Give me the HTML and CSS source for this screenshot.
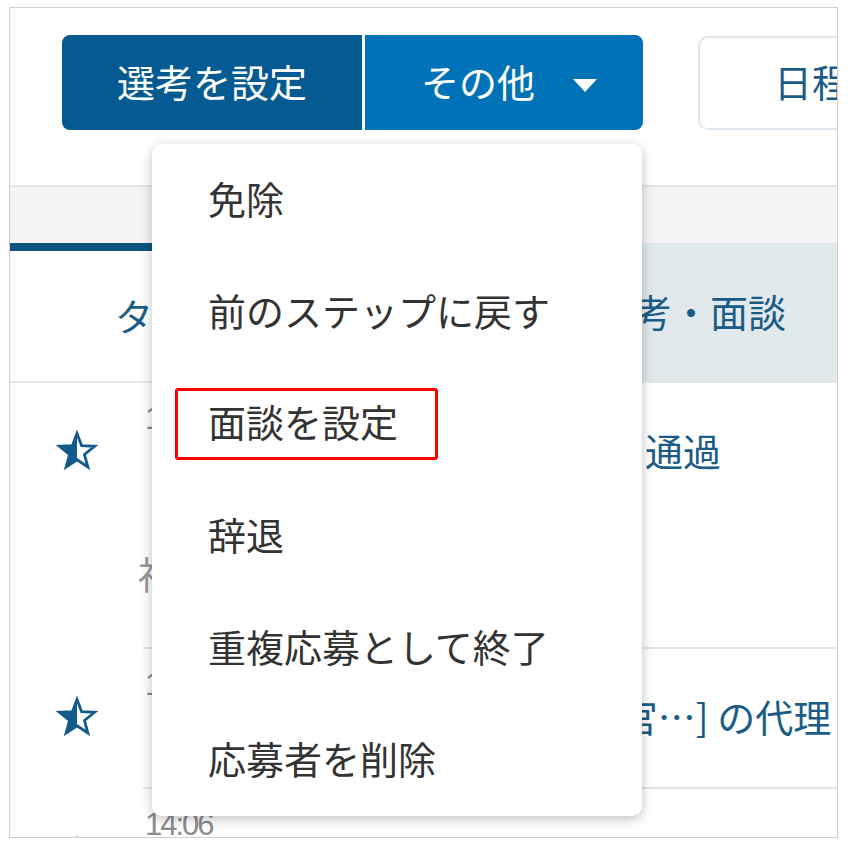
FILE: index.html
```html
<!DOCTYPE html>
<html lang="ja">
<head>
<meta charset="utf-8">
<title>選考</title>
<link rel="stylesheet" href="styles.css">
</head>
<body>
<div class="frame">
  <div class="toolbar">
    <div class="btn-group">
      <button class="btn btn-dark">選考を設定</button>
      <button class="btn btn-blue">その他<span class="caret"></span></button>
    </div>
    <button class="btn btn-outline">日程調整</button>
  </div>
  <div class="band"></div>
  <div class="head-row">
    <div class="tab-cell">タスク</div>
    <div class="head-cell">選考・面談</div>
  </div>

  <div class="row row-1">
    <div class="star-cell">
      <svg class="star" viewBox="0 0 46 46" width="46" height="46">
        <defs><clipPath id="half-1"><rect x="0" y="0" width="23" height="46"/></clipPath></defs>
        <polygon class="star-fill" clip-path="url(#half-1)" points="23,4.5 27.58,16.69 40.59,17.28 30.42,25.41 33.87,37.97 23,30.8 12.13,37.97 15.58,25.41 5.41,17.28 18.42,16.69"/>
        <polygon class="star-line" points="23,4.5 27.58,16.69 40.59,17.28 30.42,25.41 33.87,37.97 23,30.8 12.13,37.97 15.58,25.41 5.41,17.28 18.42,16.69"/>
      </svg>
    </div>
    <div class="row-body">
      <div class="info">
        <div class="time">10:42</div>
        <div class="name">福田 花子</div>
      </div>
      <div class="status">選考：通過</div>
    </div>
  </div>

  <div class="row row-2">
    <div class="star-cell">
      <svg class="star" viewBox="0 0 46 46" width="46" height="46">
        <defs><clipPath id="half-2"><rect x="0" y="0" width="23" height="46"/></clipPath></defs>
        <polygon class="star-fill" clip-path="url(#half-2)" points="23,4.5 27.58,16.69 40.59,17.28 30.42,25.41 33.87,37.97 23,30.8 12.13,37.97 15.58,25.41 5.41,17.28 18.42,16.69"/>
        <polygon class="star-line" points="23,4.5 27.58,16.69 40.59,17.28 30.42,25.41 33.87,37.97 23,30.8 12.13,37.97 15.58,25.41 5.41,17.28 18.42,16.69"/>
      </svg>
    </div>
    <div class="row-body">
      <div class="info">
        <div class="time">11:15</div>
      </div>
      <div class="status">[面接官…] の代理</div>
    </div>
  </div>

  <div class="row row-3">
    <div class="star-cell">
      <svg class="star" viewBox="0 0 46 46" width="46" height="46">
        <defs><clipPath id="half-3"><rect x="0" y="0" width="23" height="46"/></clipPath></defs>
        <polygon class="star-fill" clip-path="url(#half-3)" points="23,4.5 27.58,16.69 40.59,17.28 30.42,25.41 33.87,37.97 23,30.8 12.13,37.97 15.58,25.41 5.41,17.28 18.42,16.69"/>
        <polygon class="star-line" points="23,4.5 27.58,16.69 40.59,17.28 30.42,25.41 33.87,37.97 23,30.8 12.13,37.97 15.58,25.41 5.41,17.28 18.42,16.69"/>
      </svg>
    </div>
    <div class="row-body row-body-last">
      <div class="info">
        <div class="time">14:06</div>
      </div>
      <div class="status"></div>
    </div>
  </div>

  <ul class="menu">
    <li class="menu-item">免除</li>
    <li class="menu-item">前のステップに戻す</li>
    <li class="menu-item"><span class="mark">面談を設定</span></li>
    <li class="menu-item">辞退</li>
    <li class="menu-item">重複応募として終了</li>
    <li class="menu-item">応募者を削除</li>
  </ul>
</div>
</body>
</html>
```

FILE: styles.css
```css
* {
  box-sizing: border-box;
}

html,
body {
  margin: 0;
  padding: 0;
  background: #ffffff;
}

body {
  font-family: "Noto Sans CJK JP", "Noto Sans", sans-serif;
}

.frame {
  position: relative;
  margin: 7px 0 0 9px;
  width: 829px;
  height: 831px;
  border: 1px solid #cfcfcf;
  overflow: hidden;
  background: #ffffff;
}

/* toolbar */
.toolbar {
  height: 179px;
  padding: 27px 0 0 52px;
  display: flex;
  align-items: flex-start;
  gap: 55px;
  border-bottom: 2px solid #e6e6e6;
}

.btn-group {
  display: flex;
  gap: 3px;
  flex-shrink: 0;
}

.btn {
  font: inherit;
  font-size: 38px;
  line-height: 1;
  height: 95px;
  border: 0;
  padding: 0 0 4px 0;
  margin: 0;
  color: #ffffff;
  display: flex;
  align-items: center;
  white-space: nowrap;
  flex-shrink: 0;
}

.btn-dark {
  width: 300px;
  background: #055b91;
  border-radius: 8px 0 0 8px;
  justify-content: center;
}

.btn-blue {
  width: 278px;
  background: #0073b8;
  border-radius: 0 8px 8px 0;
  padding-left: 56px;
}

.caret {
  width: 0;
  height: 0;
  border-left: 12.5px solid transparent;
  border-right: 12.5px solid transparent;
  border-top: 13px solid #ffffff;
  margin-left: 38px;
  margin-top: 10px;
}

.btn-outline {
  height: 94px;
  margin-top: 1px;
  background: #ffffff;
  color: #1b5c86;
  border: 2px solid #dfe8ee;
  border-radius: 10px;
  padding: 0 76px 4px 74px;
}

/* band + header */
.band {
  height: 56px;
  background: #f4f4f4;
}

.head-row {
  display: flex;
  height: 140px;
  border-bottom: 2px solid #e4e7e9;
}

.tab-cell {
  width: 420px;
  background: #ffffff;
  border-top: 8px solid #0d5580;
  display: flex;
  align-items: center;
  padding: 0 0 4px 105px;
  font-size: 38px;
  color: #1b5c86;
  white-space: nowrap;
}

.head-cell {
  flex: 1;
  background: #e1e9ed;
  display: flex;
  align-items: center;
  padding: 0 0 4px 166px;
  font-size: 38px;
  color: #1b5c86;
  white-space: nowrap;
}

/* rows */
.row {
  display: flex;
}

.row-1 {
  height: 266px;
}

.row-2 {
  height: 140px;
}

.row-3 {
  height: 100px;
}

.star-cell {
  width: 133px;
  flex-shrink: 0;
  display: flex;
  justify-content: center;
  align-items: flex-start;
  padding-top: 46px;
}

.star {
  display: block;
}

.star-fill {
  fill: #125a8a;
}

.star-line {
  fill: none;
  stroke: #125a8a;
  stroke-width: 2.8;
  stroke-linejoin: miter;
  stroke-miterlimit: 10;
}

.row-body {
  flex: 1;
  display: flex;
  border-bottom: 2px solid #e6e6e6;
  min-width: 0;
}

.row-body-last {
  border-bottom: 0;
}

.info {
  width: 388px;
  flex-shrink: 0;
  padding: 19px 0 0 2px;
}

.time {
  font-family: "Liberation Sans", Arial, sans-serif;
  font-size: 31px;
  line-height: 34px;
  letter-spacing: -2px;
  color: #8c8c8c;
}

.name {
  margin: 114px 0 0 -7px;
  font-size: 38px;
  line-height: 46px;
  color: #999999;
  white-space: nowrap;
}

.status {
  flex: 1;
  padding-top: 44px;
  font-size: 38px;
  line-height: 46px;
  color: #1b5c86;
  white-space: nowrap;
  overflow: hidden;
}

/* dropdown menu */
.menu {
  position: absolute;
  left: 142px;
  top: 136px;
  width: 490px;
  margin: 0;
  padding: 0;
  list-style: none;
  background: #ffffff;
  border-radius: 10px;
  box-shadow: 0 3px 12px rgba(0, 0, 0, 0.25);
}

.menu-item {
  height: 112px;
  display: flex;
  align-items: center;
  padding: 0 0 5px 56px;
  font-size: 38px;
  line-height: 1;
  color: #333333;
  white-space: nowrap;
}

.mark {
  border: 3px solid #ff0000;
  border-radius: 3px;
  padding: 11px 37px 17px 30px;
  margin: 5px 0 0 -33px;
}
```
